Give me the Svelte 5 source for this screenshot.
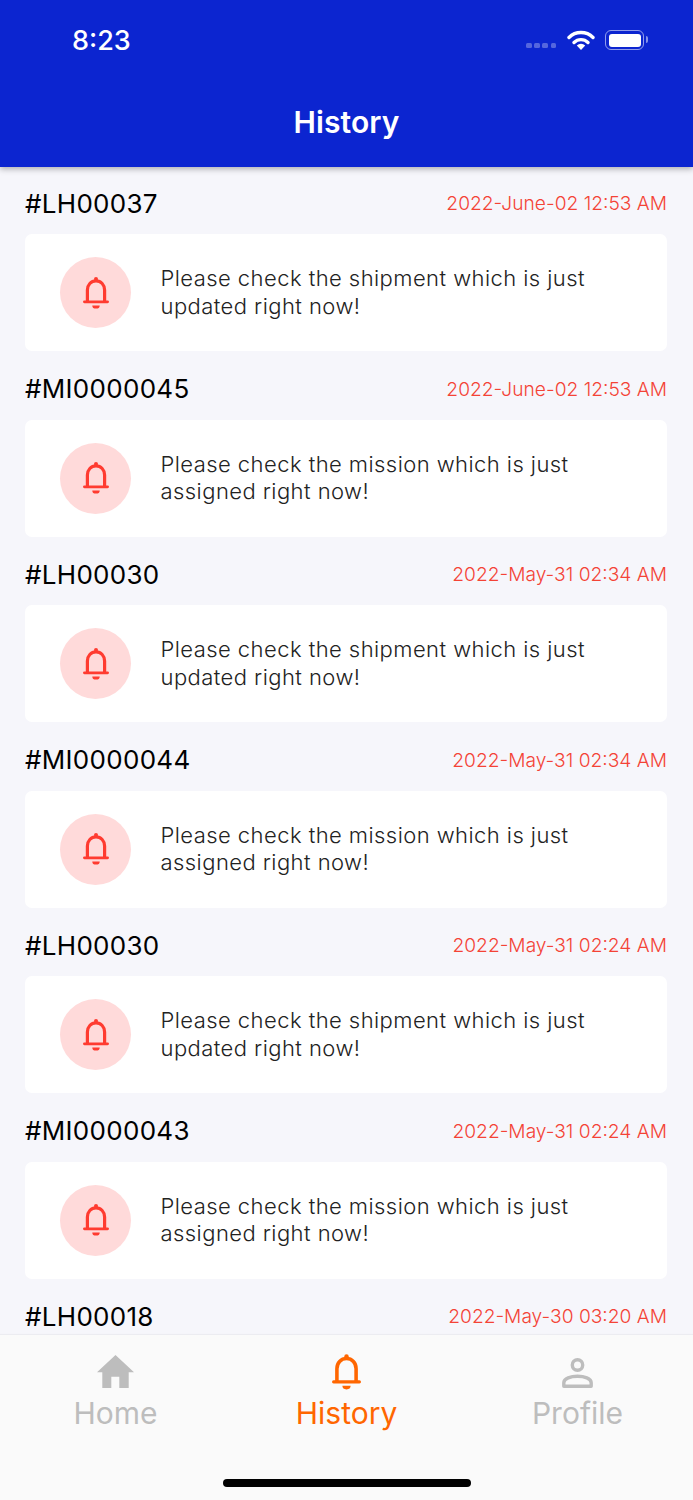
<script>
	// the last entry only shows its heading above the tab bar, so it has no body
	const notes = [
		{ id: '#LH00037', date: '2022-June-02 12:53 AM', kind: 'shipment', verb: 'updated' },
		{ id: '#MI0000045', date: '2022-June-02 12:53 AM', kind: 'mission', verb: 'assigned' },
		{ id: '#LH00030', date: '2022-May-31 02:34 AM', kind: 'shipment', verb: 'updated' },
		{ id: '#MI0000044', date: '2022-May-31 02:34 AM', kind: 'mission', verb: 'assigned' },
		{ id: '#LH00030', date: '2022-May-31 02:24 AM', kind: 'shipment', verb: 'updated' },
		{ id: '#MI0000043', date: '2022-May-31 02:24 AM', kind: 'mission', verb: 'assigned' },
		{ id: '#LH00018', date: '2022-May-30 03:20 AM' }
	];
</script>

{#snippet bell(cls)}
	<svg class={cls} viewBox="0 0 26 32" aria-hidden="true">
		<circle cx="13" cy="2" r="2" fill="currentColor" />
		<path d="M4.4 24.5V13C4.4 7.8 8 3.9 13 3.9S21.6 7.8 21.6 13V24.5" fill="none" stroke="currentColor" stroke-width="3.2" />
		<path d="M1.4 24.8h23.2" fill="none" stroke="currentColor" stroke-width="2.8" stroke-linecap="round" />
		<path d="M9.3 28.4h7.4a3.7 3.2 0 0 1-7.4 0z" fill="currentColor" />
	</svg>
{/snippet}

<div class="screen">
	<header class="topbar">
		<div class="status">
			<span class="clock">8:23</span>
			<div class="status__icons">
				<div class="signal"><i></i><i></i><i></i><i></i></div>
				<svg class="wifi" viewBox="0 0 28 20" aria-hidden="true">
					<path d="M2 7.5a17 17 0 0 1 24 0" fill="none" stroke="#fff" stroke-width="3.4" stroke-linecap="round" />
					<path d="M7 12.5a10 10 0 0 1 14 0" fill="none" stroke="#fff" stroke-width="3.4" stroke-linecap="round" />
					<path d="M9.8 15.4a6 6 0 0 1 8.4 0L14 20z" fill="#fff" />
				</svg>
				<div class="battery"><span class="battery__level"></span></div>
			</div>
		</div>
		<h1>History</h1>
	</header>

	<main class="list">
		{#each notes as note}
			<section class="note">
				<div class="note__head">
					<span class="note__id">{note.id}</span>
					<span class="note__date">{note.date}</span>
				</div>
				{#if note.kind}
					<div class="card">
						<div class="badge">{@render bell('badge__bell')}</div>
						<p>Please check the {note.kind} which is just<br />{note.verb} right now!</p>
					</div>
				{/if}
			</section>
		{/each}
	</main>

	<nav class="tabs">
		<div class="tabs__row">
			<div class="tab">
				<div class="tab__icon">
					<svg class="tab__home" viewBox="0 0 37 33" aria-hidden="true">
						<path d="M18.5 0L37 17.3h-5.3V33h-9.4V21.7h-8V33H5.3V17.3H0z" fill="currentColor" />
					</svg>
				</div>
				<span>Home</span>
			</div>
			<div class="tab tab--active">
				<div class="tab__icon">{@render bell('tab__bell')}</div>
				<span>History</span>
			</div>
			<div class="tab">
				<div class="tab__icon">
					<svg class="tab__profile" viewBox="0 0 31 30" aria-hidden="true">
						<circle cx="15.5" cy="7" r="5.2" fill="none" stroke="currentColor" stroke-width="3.4" />
						<path d="M1.8 28.3v-3.6c0-4.2 7-6.4 13.7-6.4s13.7 2.2 13.7 6.4v3.6z" fill="none" stroke="currentColor" stroke-width="3.4" stroke-linejoin="round" />
					</svg>
				</div>
				<span>Profile</span>
			</div>
		</div>
		<div class="home-bar"></div>
	</nav>
</div>

<style>
	:global(body) {
		margin: 0;
	}

	.screen {
		display: flex;
		flex-direction: column;
		width: 693px;
		height: 1500px;
		overflow: hidden;
		background: #f6f6fb;
		font-family: Inter, 'Noto Sans', sans-serif;
	}

	.topbar {
		position: relative;
		z-index: 1;
		flex: none;
		box-sizing: border-box;
		height: 167px;
		background: #0c25d0;
		box-shadow: 0 2px 6px rgba(0, 0, 0, 0.3);
		color: #fff;
	}

	.status {
		display: flex;
		align-items: center;
		justify-content: space-between;
		height: 40px;
		padding: 20px 49px 0 72px;
	}

	.clock {
		font-size: 27px;
		font-weight: 500;
	}

	.status__icons {
		display: flex;
		align-items: center;
	}

	.signal {
		display: flex;
		gap: 2.6px;
		margin: 11px 11px 0 0;
	}

	.signal i {
		width: 5.5px;
		height: 5.5px;
		border-radius: 1.5px;
		background: rgba(255, 255, 255, 0.3);
	}

	.wifi {
		width: 28px;
		height: 20px;
		margin-right: 10px;
	}

	.battery {
		position: relative;
		box-sizing: border-box;
		width: 39px;
		height: 20px;
		padding: 2.5px;
		border: 1.5px solid rgba(255, 255, 255, 0.55);
		border-radius: 6px;
	}

	.battery::after {
		content: '';
		position: absolute;
		right: -5px;
		top: 5px;
		width: 2px;
		height: 7px;
		border-radius: 0 2px 2px 0;
		background: rgba(255, 255, 255, 0.5);
	}

	.battery__level {
		display: block;
		height: 100%;
		border-radius: 3px;
		background: #fff;
	}

	h1 {
		margin: 42px 0 0;
		text-align: center;
		font-size: 30px;
		font-weight: 600;
		line-height: 40px;
		letter-spacing: 0.1px;
	}

	.list {
		flex: 1;
		min-height: 0;
		overflow: hidden;
		display: flex;
		flex-direction: column;
		gap: 18.5px;
		padding: 17px 26px 0 25px;
	}

	.note {
		flex: none;
	}

	.note__head {
		display: flex;
		align-items: center;
		justify-content: space-between;
		height: 38px;
		margin-bottom: 12px;
	}

	.note__id {
		font-size: 26px;
		letter-spacing: 0.3px;
		color: #000;
	}

	.note__date {
		font-size: 19.2px;
		font-weight: 300;
		color: #f44336;
	}

	.card {
		display: flex;
		align-items: center;
		gap: 29.5px;
		box-sizing: border-box;
		height: 117px;
		padding-left: 35px;
		border-radius: 7px;
		background: #fff;
	}

	.badge {
		display: flex;
		align-items: center;
		justify-content: center;
		flex: none;
		width: 71px;
		height: 71px;
		border-radius: 50%;
		background: #ffdada;
		color: #ff3b30;
	}

	.badge__bell {
		width: 26px;
		height: 32px;
	}

	p {
		margin: 0;
		font-size: 22px;
		font-weight: 350;
		line-height: 27.5px;
		letter-spacing: 0.44px;
		color: #222;
	}

	.tabs {
		position: relative;
		flex: none;
		height: 165.5px;
		background: #fafafa;
		box-shadow: 0 -1px 1px rgba(0, 0, 0, 0.04);
	}

	.tabs__row {
		display: grid;
		grid-template-columns: repeat(3, 1fr);
		box-sizing: border-box;
		height: 110px;
		padding-top: 19px;
	}

	.tab {
		display: flex;
		flex-direction: column;
		align-items: center;
		color: #bdbdbd;
		font-size: 30px;
		line-height: 36px;
	}

	.tab span {
		margin-top: 5px;
	}

	.tab--active {
		color: #ff6600;
	}

	.tab__icon {
		display: flex;
		justify-content: center;
		align-items: flex-start;
		height: 36px;
	}

	.tab__home {
		width: 37px;
		height: 33px;
		margin-top: 1px;
	}

	.tab__bell {
		width: 29px;
		height: 36px;
	}

	.tab__profile {
		width: 31px;
		height: 30px;
		margin-top: 4px;
	}

	.home-bar {
		width: 248px;
		height: 8px;
		margin: 34.5px auto 0;
		border-radius: 4px;
		background: #000;
	}
</style>
